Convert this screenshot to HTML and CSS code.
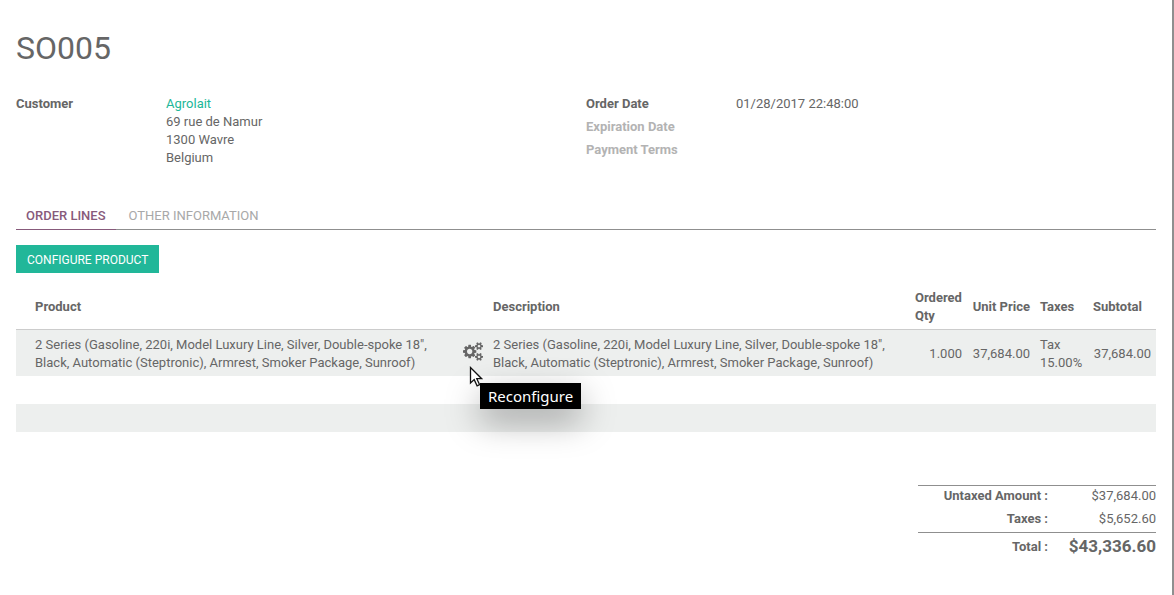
FILE: index.html
```html
<!DOCTYPE html>
<html lang="en">
<head>
<meta charset="utf-8">
<title>SO005</title>
<link rel="stylesheet" href="styles.css">
</head>
<body>
<main class="sheet">
  <h1 class="title">SO005</h1>

  <section class="groups">
    <dl class="group">
      <dt>Customer</dt>
      <dd><a class="link" href="#">Agrolait</a><br>69 rue de Namur<br>1300 Wavre<br>Belgium</dd>
    </dl>
    <dl class="group">
      <dt>Order Date</dt>
      <dd>01/28/2017 22:48:00</dd>
      <dt class="empty">Expiration Date</dt>
      <dd></dd>
      <dt class="empty">Payment Terms</dt>
      <dd></dd>
    </dl>
  </section>

  <nav class="tabs">
    <a class="tab active" href="#lines">ORDER LINES</a>
    <a class="tab" href="#other">OTHER INFORMATION</a>
  </nav>

  <button class="primary" type="button">CONFIGURE PRODUCT</button>

  <table class="lines" id="lines">
    <colgroup>
      <col class="c-handle"><col><col class="c-icon"><col><col class="c-qty"><col class="c-price"><col class="c-tax"><col class="c-price">
    </colgroup>
    <thead>
      <tr>
        <th></th><th>Product</th><th></th><th>Description</th><th>Ordered Qty</th><th class="num">Unit Price</th><th>Taxes</th><th>Subtotal</th>
      </tr>
    </thead>
    <tbody>
      <tr>
        <td></td>
        <td>2 Series (Gasoline, 220i, Model Luxury Line, Silver, Double-spoke 18", Black, Automatic (Steptronic), Armrest, Smoker Package, Sunroof)</td>
        <td class="num">
          <div class="action">
            <button class="icon-button" type="button" aria-labelledby="tip">
              <svg class="cogs" viewBox="0 0 1920 1792" aria-hidden="true"><path d="M896 896q0-106-75-181t-181-75-181 75-75 181 75 181 181 75 181-75 75-181zm768 512q0-52-38-90t-90-38-90 38-38 90q0 53 37.500 90.500t90.500 37.500 90.500-37.500 37.500-90.500zm0-1024q0-52-38-90t-90-38-90 38-38 90q0 53 37.500 90.500t90.500 37.500 90.500-37.500 37.500-90.500zm-384 421v185q0 10-7 19.500t-16 10.500l-155 24q-11 35-32 76 34 48 90 115 7 11 7 20 0 12-7 19-23 30-82.500 89.500t-78.500 59.500q-11 0-21-7l-115-90q-37 19-77 31-11 108-23 155-7 24-30 24h-186q-11 0-20-7.500t-10-17.500l-23-153q-34-10-75-31l-118 89q-7 7-20 7-11 0-21-8-144-133-144-160 0-9 7-19 10-14 41-53t47-61q-23-44-35-82l-152-24q-10-1-17-9.500t-7-19.500v-185q0-10 7-19.500t16-10.500l155-24q11-35 32-76-34-48-90-115-7-11-7-20 0-12 7-20 22-30 82-89t79-59q11 0 21 7l115 90q34-18 77-32 11-108 23-154 7-24 30-24h186q11 0 20 7.500t10 17.500l23 153q34 10 75 31l118-89q8-7 20-7 11 0 21 8 144 133 144 160 0 8-7 19-12 16-42 54t-45 60q23 48 34 82l152 23q10 2 17 10.500t7 19.500zm640 533v140q0 16-149 31-12 27-30 52 51 113 51 138 0 4-4 7-122 71-124 71-8 0-46-47t-52-68q-20 2-30 2t-30-2q-14 21-52 68t-46 47q-2 0-124-71-4-3-4-7 0-25 51-138-18-25-30-52-149-15-149-31v-140q0-16 149-31 13-29 30-52-51-113-51-138 0-4 4-7 4-2 35-20t59-34 30-16q8 0 46 46.500t52 67.500q20-2 30-2t30 2q51-71 92-112l6-2q4 0 124 70 4 3 4 7 0 25-51 138 17 23 30 52 149 15 149 31zm0-1024v140q0 16-149 31-12 27-30 52 51 113 51 138 0 4-4 7-122 71-124 71-8 0-46-47t-52-68q-20 2-30 2t-30-2q-14 21-52 68t-46 47q-2 0-124-71-4-3-4-7 0-25 51-138-18-25-30-52-149-15-149-31v-140q0-16 149-31 13-29 30-52-51-113-51-138 0-4 4-7 4-2 35-20t59-34 30-16q8 0 46 46.500t52 67.500q20-2 30-2t30 2q51-71 92-112l6-2q4 0 124 70 4 3 4 7 0 25-51 138 17 23 30 52 149 15 149 31z"/></svg>
            </button>
            <span class="tooltip" id="tip" role="tooltip">Reconfigure</span>
            <svg class="pointer" viewBox="0 0 14 22" aria-hidden="true"><path d="M1.500 1.500V17l3.700-3.400 2.900 6.200 2.500-1.200-2.800-5.900h4.900z"/></svg>
          </div>
        </td>
        <td>2 Series (Gasoline, 220i, Model Luxury Line, Silver, Double-spoke 18", Black, Automatic (Steptronic), Armrest, Smoker Package, Sunroof)</td>
        <td class="num">1.000</td>
        <td class="num">37,684.00</td>
        <td>Tax 15.00%</td>
        <td class="num">37,684.00</td>
      </tr>
      <tr><td colspan="8">&nbsp;</td></tr>
      <tr><td colspan="8">&nbsp;</td></tr>
    </tbody>
  </table>

  <table class="totals">
    <tbody>
      <tr><th scope="row">Untaxed Amount :</th><td>$37,684.00</td></tr>
      <tr><th scope="row">Taxes :</th><td>$5,652.60</td></tr>
      <tr class="grand"><th scope="row">Total :</th><td>$43,336.60</td></tr>
    </tbody>
  </table>
</main>
</body>
</html>
```
FILE: styles.css
```css
* { box-sizing: border-box; }
body {
  margin: 0;
  background: #fff;
  color: #666;
  font: 13px/18px Roboto, "Liberation Sans", sans-serif;
}
.sheet {
  min-height: 100vh;
  padding: 28px 16px 32px;
  border-right: 2px solid #8f8f8f;
}
.title {
  margin: 0 0 27px;
  font-size: 32px;
  line-height: 40px;
  font-weight: 400;
}
.groups {
  display: grid;
  grid-template-columns: 1fr 1fr;
}
.group {
  display: grid;
  grid-template-columns: 150px 1fr;
  align-content: start;
  row-gap: 5px;
  margin: 0;
}
dt, th { font-weight: 700; }
dd { margin: 0; }
.empty { color: #b3b3b3; }
.link { color: #21b799; text-decoration: none; }

.tabs {
  display: flex;
  gap: 3px;
  margin: 34px 0 15px;
  border-bottom: 1px solid #8f8f8f;
}
.tab {
  margin-bottom: -1px;
  padding: 6px 10px 4px;
  border-bottom: 1px solid transparent;
  color: #a8a8a8;
  text-decoration: none;
}
.tab.active {
  border-color: #875a7b;
  color: #875a7b;
  font-weight: 500;
}
.primary {
  display: block;
  padding: 6px 11px 4px;
  border: 0;
  background: #21b799;
  color: #fff;
  font: inherit;
  font-size: 12px;
}

table { border-collapse: collapse; }
.lines {
  width: 100%;
  margin-top: 11px;
  table-layout: fixed;
}
.c-handle { width: 14px; }
.c-icon { width: 36px; }
.c-qty { width: 57px; }
.c-price { width: 68px; }
.c-tax { width: 53px; }
.lines th, .lines td {
  padding: 5px;
  text-align: left;
}
.lines thead { border-bottom: 1px solid #ccc; }
.lines thead th { padding-bottom: 4px; }
.lines tbody td { padding: 6px 5px 4px; }
.lines tbody tr:nth-child(odd) { background: #edefee; }
.lines .num { text-align: right; }

.action {
  position: relative;
  display: flex;
  justify-content: flex-end;
}
.icon-button {
  display: block;
  padding: 0 0 6px;
  border: 0;
  background: none;
  color: inherit;
}
.cogs {
  display: block;
  width: 20px;
  height: 19px;
  fill: currentColor;
}
.tooltip {
  position: absolute;
  top: 41px;
  left: 23px;
  padding: 4px 8px;
  background: #000;
  color: #fff;
  font: 15px/18px "Noto Sans", sans-serif;
  box-shadow: 0 12px 34px rgba(0, 0, 0, .35);
}
.pointer {
  position: absolute;
  top: 24px;
  left: 12px;
  width: 14px;
  height: 22px;
  fill: #fff;
  stroke: #111;
  stroke-width: 1.3;
}

.totals {
  width: 238px;
  margin: 53px 0 0 auto;
  border-top: 1px solid #8f8f8f;
  text-align: right;
}
.totals th {
  width: 130px;
  padding: 1px 0 4px;
}
.totals td { padding: 1px 0 4px; }
.totals .grand { border-top: 1px solid #8f8f8f; }
.totals .grand th { padding: 5px 0 0; }
.totals .grand td {
  padding: 3px 0 1px;
  font-size: 17px;
  font-weight: 700;
}
```
